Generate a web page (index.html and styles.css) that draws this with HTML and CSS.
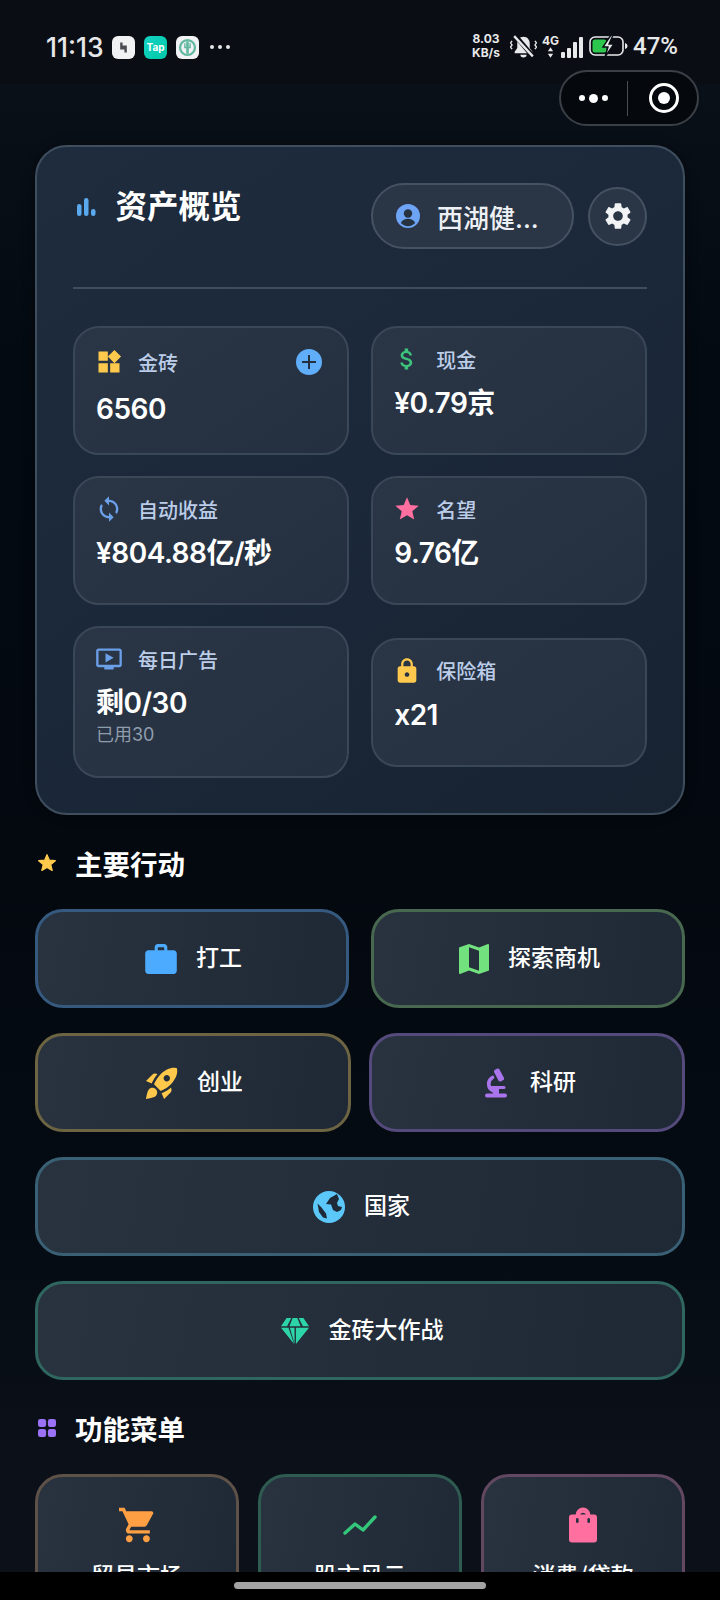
FILE: index.html
```html
<!DOCTYPE html>
<html lang="zh-CN">
<head>
    <meta charset="UTF-8">
    <meta name="viewport" content="width=device-width, initial-scale=1.0">
    <title>资产概览</title>
    <link rel="stylesheet" href="styles.css">
</head>
<body>
<div class="phone">

    <!-- Status bar -->
    <div class="status-bar">
        <div class="status-left">
            <span class="clock">11:13</span>
            <span class="app-icon app-white">
                <svg viewBox="0 0 24 24" width="17" height="17"><path d="M9 5v8h6M15 19v-8H9" fill="none" stroke="#4a4d52" stroke-width="3.4"/></svg>
            </span>
            <span class="app-icon app-tap">Tap</span>
            <span class="app-icon app-white">
                <svg viewBox="0 0 24 24" width="21" height="21"><circle cx="12" cy="12" r="8.5" fill="none" stroke="#62b8a0" stroke-width="2.6"/><path d="M12 5v14" stroke="#62b8a0" stroke-width="3"/><path d="M9 7v5h6V7" fill="none" stroke="#62b8a0" stroke-width="1.6"/></svg>
            </span>
            <span class="more-dots"><i></i><i></i><i></i></span>
        </div>
        <div class="status-right">
            <span class="net-speed">8.03<br>KB/s</span>
            <svg class="bell" viewBox="1 1 26 23" width="27" height="25">
                <path d="M14 3c-3.600 0-6 2.800-6 6.500v4.500L5.500 17.500v1.500h17v-1.500L20 14V9.500C20 5.800 17.600 3 14 3z" fill="#e8e9ea"/>
                <path d="M11 20.500h6a3 2.500 0 0 1-6 0z" fill="#e8e9ea"/>
                <path d="M6 2l17 20" stroke="#0a0e15" stroke-width="4.500"/>
                <path d="M5 2.500l18 19.500" stroke="#e8e9ea" stroke-width="2.200"/>
                <path d="M3 7L1.500 9 3 11l-1.500 2L3 15M25 7l1.500 2-1.500 2 1.500 2-1.500 2" fill="none" stroke="#e8e9ea" stroke-width="1.300"/>
            </svg>
            <span class="signal">
                <span class="net-type">4G
                    <svg viewBox="0 0 8 12" width="7" height="11"><path d="M4 0l3 4.500H1zM4 12L1 7.500h6z" fill="#e8e9ea"/></svg>
                </span>
                <span class="bars"><i class="bar1"></i><i class="bar2"></i><i class="bar3"></i><i class="bar4"></i></span>
            </span>
            <svg class="battery" viewBox="0 0 40 24" width="40" height="24">
                <rect x="1" y="3" width="33" height="18" rx="5" fill="none" stroke="#e8e9ea" stroke-width="1.600"/>
                <rect x="3.500" y="5.500" width="14" height="13" rx="2.500" fill="#2cc84d"/>
                <path d="M36 9v6c1.500-.5 2.500-1.500 2.500-3S37.500 9.500 36 9z" fill="#e8e9ea"/>
                <path d="M22 1l-8 12h5l-3 10 9-13h-5l4-9z" fill="#e8e9ea" stroke="#0a0e15" stroke-width="1.400"/>
            </svg>
            <span class="battery-pct">47%</span>
        </div>
    </div>

    <!-- Mini program capsule -->
    <div class="capsule">
        <span class="capsule-dots"><i></i><i class="big"></i><i></i></span>
        <span class="capsule-line"></span>
        <span class="capsule-target"><i></i></span>
    </div>

    <div class="content">

        <!-- Assets card -->
        <section class="asset-card">
            <div class="asset-head">
                <h1 class="asset-title">
                    <svg viewBox="0 0 20 20" width="20" height="20"><rect x="1" y="7" width="4.500" height="12" rx="2.200" fill="#5aa9ee"/><rect x="8" y="1" width="4.500" height="18" rx="2.200" fill="#5aa9ee"/><rect x="15" y="12" width="4.500" height="7" rx="2.200" fill="#5aa9ee"/></svg>
                    资产概览
                </h1>
                <div class="head-actions">
                    <div class="user-pill">
                        <svg viewBox="0 0 24 24" width="24" height="24"><circle cx="12" cy="12" r="12" fill="#6ea4f5"/><circle cx="12" cy="9.500" r="4.200" fill="#26323f"/><path d="M4.800 19c1.500-3 4-4.200 7.200-4.200s5.700 1.200 7.200 4.200c-1.800 2-4.400 3.200-7.200 3.200S6.600 21 4.800 19z" fill="#26323f"/></svg>
                        <span>西湖健...</span>
                    </div>
                    <div class="gear-btn">
                        <svg viewBox="0 0 24 24" width="32" height="32"><path fill="#f2f3f5" d="M19.140 12.940c.04-.3.06-.61.06-.94 0-.32-.02-.64-.07-.94l2.030-1.580c.18-.14.23-.41.12-.61l-1.920-3.320c-.12-.22-.37-.29-.59-.22l-2.390.96c-.5-.38-1.030-.7-1.620-.94l-.36-2.540c-.04-.24-.24-.41-.48-.41h-3.840c-.24 0-.43.17-.47.41l-.36 2.540c-.59.24-1.130.57-1.620.94l-2.390-.96c-.22-.08-.47 0-.59.22L2.740 8.870c-.12.21-.08.47.12.61l2.030 1.580c-.05.3-.09.63-.09.94s.02.64.07.94l-2.030 1.580c-.18.14-.23.41-.12.61l1.920 3.320c.12.22.37.29.59.22l2.390-.96c.5.38 1.030.7 1.620.94l.36 2.540c.05.24.24.41.48.41h3.840c.24 0 .44-.17.47-.41l.36-2.540c.59-.24 1.130-.56 1.620-.94l2.390.96c.22.08.47 0 .59-.22l1.920-3.320c.12-.22.07-.47-.12-.61l-2.010-1.580zM12 15.600c-1.980 0-3.600-1.620-3.600-3.600s1.620-3.600 3.600-3.600 3.600 1.620 3.600 3.600-1.620 3.600-3.600 3.600z"/></svg>
                    </div>
                </div>
            </div>

            <div class="tile-grid">
                <div class="tile">
                    <div class="tile-label tall">
                        <svg viewBox="0 0 24 24" width="28" height="28"><path fill="#ffc94d" d="M13 13v8h8v-8h-8zM3 21h8v-8H3v8zM3 3v8h8V3H3zm13.660-1.310L11 7.340 16.660 13l5.660-5.660-5.660-5.650z"/></svg>
                        <span>金砖</span>
                        <span class="plus-btn"></span>
                    </div>
                    <div class="tile-value">6560</div>
                </div>
                <div class="tile">
                    <div class="tile-label">
                        <svg viewBox="0 0 24 24" width="28" height="28"><path fill="#3cc47c" d="M11.800 10.900c-2.270-.59-3-1.200-3-2.150 0-1.090 1.010-1.850 2.700-1.850 1.780 0 2.440.85 2.500 2.100h2.210c-.07-1.720-1.120-3.300-3.210-3.810V3h-3v2.160c-1.940.42-3.500 1.680-3.500 3.610 0 2.310 1.910 3.460 4.700 4.130 2.500.6 3 1.480 3 2.410 0 .69-.49 1.790-2.700 1.790-2.060 0-2.870-.92-2.980-2.100h-2.200c.12 2.190 1.760 3.420 3.680 3.830V21h3v-2.150c1.950-.37 3.500-1.500 3.500-3.550 0-2.840-2.430-3.810-4.700-4.400z"/></svg>
                        <span>现金</span>
                    </div>
                    <div class="tile-value">¥0.79京</div>
                </div>
                <div class="tile">
                    <div class="tile-label">
                        <svg viewBox="0 0 24 24" width="28" height="28"><path fill="#6b9fe8" d="M12 4V1L8 5l4 4V6c3.310 0 6 2.690 6 6 0 1.010-.25 1.970-.7 2.800l1.460 1.460C19.540 15.030 20 13.570 20 12c0-4.420-3.580-8-8-8zm0 14c-3.310 0-6-2.690-6-6 0-1.010.25-1.970.7-2.800L5.240 7.740C4.460 8.970 4 10.430 4 12c0 4.420 3.580 8 8 8v3l4-4-4-4v3z"/></svg>
                        <span>自动收益</span>
                    </div>
                    <div class="tile-value">¥804.88亿/秒</div>
                </div>
                <div class="tile">
                    <div class="tile-label">
                        <svg viewBox="0 0 24 24" width="28" height="28"><path fill="#ff6f9f" d="M12 17.270L18.180 21l-1.640-7.030L22 9.240l-7.190-.61L12 2 9.190 8.630 2 9.240l5.460 4.730L5.820 21z"/></svg>
                        <span>名望</span>
                    </div>
                    <div class="tile-value">9.76亿</div>
                </div>
                <div class="tile">
                    <div class="tile-label">
                        <svg viewBox="0 0 24 24" width="28" height="28"><path fill="#6b9fe8" d="M21 3H3c-1.110 0-2 .89-2 2v12c0 1.100.89 2 2 2h5v2h8v-2h5c1.100 0 1.990-.9 1.990-2L23 5c0-1.110-.9-2-2-2zm0 14H3V5h18v12zm-5-6l-7 4V7z"/></svg>
                        <span>每日广告</span>
                    </div>
                    <div class="tile-value">剩0/30</div>
                    <div class="tile-sub">已用30</div>
                </div>
                <div class="tile">
                    <div class="tile-label">
                        <svg viewBox="0 0 24 24" width="28" height="28"><path fill="#ffc94d" d="M18 8h-1V6c0-2.760-2.240-5-5-5S7 3.240 7 6v2H6c-1.100 0-2 .9-2 2v10c0 1.100.9 2 2 2h12c1.100 0 2-.9 2-2V10c0-1.100-.9-2-2-2zm-6 9c-1.100 0-2-.9-2-2s.9-2 2-2 2 .9 2 2-.9 2-2 2zm3.100-9H8.900V6c0-1.710 1.390-3.100 3.100-3.100 1.710 0 3.100 1.390 3.100 3.100v2z"/></svg>
                        <span>保险箱</span>
                    </div>
                    <div class="tile-value">x21</div>
                </div>
            </div>
        </section>

        <!-- Main actions -->
        <h2 class="section-title">
            <svg class="star-icon" viewBox="0 0 24 24" width="20" height="20"><path fill="#ffc94d" stroke="#ffc94d" stroke-width="1.500" stroke-linejoin="round" d="M12 17.270L18.180 21l-1.640-7.030L22 9.240l-7.190-.61L12 2 9.190 8.630 2 9.240l5.460 4.730L5.820 21z"/></svg>
            主要行动
        </h2>
        <div class="actions">
            <div class="action-row">
                <button class="action-btn b-blue">
                    <svg viewBox="2 2 20 19" width="32" height="30"><path fill="#4dabff" d="M20 6h-4V4c0-1.110-.89-2-2-2h-4c-1.110 0-2 .89-2 2v2H4c-1.110 0-1.990.89-1.990 2L2 19c0 1.110.89 2 2 2h16c1.110 0 2-.89 2-2V8c0-1.110-.89-2-2-2zm-6 0h-4V4h4v2z"/></svg>
                    <span class="btn-text">打工</span>
                </button>
                <button class="action-btn b-green">
                    <svg viewBox="3 3 18 18" width="30" height="30"><path fill="#72e27e" d="M20.500 3l-.16.03L15 5.100 9 3 3.360 4.900c-.21.07-.36.25-.36.48V20.500c0 .28.22.5.5.5l.16-.03L9 18.900l6 2.100 5.640-1.900c.21-.07.36-.25.36-.48V3.500c0-.28-.22-.5-.5-.5zM15 19l-6-2.110V5l6 2.110V19z"/></svg>
                    <span class="btn-text">探索商机</span>
                </button>
            </div>
            <div class="action-row tight">
                <button class="action-btn b-gold">
                    <svg viewBox="2 2 20 20" width="32" height="32"><path fill="#ffc84a" d="M9.190 6.350c-2.040 2.290-3.440 5.580-3.570 5.890L2 10.690l4.050-4.050c.47-.47 1.150-.68 1.810-.55l1.330.26zM11.170 17s3.740-1.550 5.890-3.700c5.400-5.400 4.500-9.620 4.210-10.570-.95-.3-5.170-1.190-10.570 4.210C8.550 9.090 7 12.830 7 12.830L11.170 17zm6.480-2.190c-2.290 2.040-5.580 3.440-5.890 3.570L13.310 22l4.050-4.050c.47-.47.68-1.150.55-1.810l-.26-1.330zM9 18c0 .83-.34 1.580-.88 2.120C6.940 21.300 2 22 2 22s.7-4.940 1.880-6.120C4.420 15.340 5.170 15 6 15c1.660 0 3 1.340 3 3zm4-9c0-1.100.9-2 2-2s2 .9 2 2-.9 2-2 2-2-.9-2-2z"/></svg>
                    <span class="btn-text">创业</span>
                </button>
                <button class="action-btn b-purple">
                    <svg class="scope-icon" viewBox="0 0 24 30" width="24" height="30">
                        <rect x="12" y="0.500" width="6" height="13" rx="2" fill="#a974ec" transform="rotate(-28 15 7)"/>
                        <path d="M9.500 9.500a7.500 7.500 0 0 0 0 13" fill="none" stroke="#a974ec" stroke-width="3.600" stroke-linecap="round" transform="translate(-1 0)"/>
                        <path d="M6 19.500h14" stroke="#a974ec" stroke-width="3" stroke-linecap="round"/>
                        <rect x="9" y="20" width="6" height="6" fill="#a974ec"/>
                        <rect x="1" y="25.500" width="22" height="4" rx="2" fill="#a974ec"/>
                    </svg>
                    <span class="btn-text">科研</span>
                </button>
            </div>
            <button class="action-btn b-sky">
                <svg viewBox="0 0 32 32" width="32" height="32">
                    <circle cx="16" cy="16" r="16" fill="#5cc8fa"/>
                    <path d="M24 3l-7 4-4 6 5 .5 2 5.500 4 2 4-2 1-3-4-1-1-3 2-4z" fill="#1f2a38"/>
                    <path d="M4.500 12.500l4 4 4.500 6 1 5-4-1-4-5.500z" fill="#1f2a38"/>
                </svg>
                <span class="btn-text">国家</span>
            </button>
            <button class="action-btn b-teal">
                <svg viewBox="0 0 32 30" width="30" height="28">
                    <path d="M7 1h5l-4.500 9H1z M13.500 1h5l3.500 9H10z M20 1h5l6 9h-6.500z M1 11.500h8L15 29z M10.500 11.500h5V29z M17 11.500h5.500l.3 0L17 29z M22.500 11.500H31L17 29z" fill="#2dd4a8"/>
                </svg>
                <span class="btn-text">金砖大作战</span>
            </button>
        </div>

        <!-- Function menu -->
        <h2 class="section-title menu-title">
            <svg viewBox="0 0 20 20" width="18" height="18"><rect x="0" y="0" width="9" height="9" rx="2.500" fill="#9b72f5"/><rect x="11" y="0" width="9" height="9" rx="2.500" fill="#9b72f5"/><rect x="0" y="11" width="9" height="9" rx="2.500" fill="#9b72f5"/><rect x="11" y="11" width="9" height="9" rx="2.500" fill="#9b72f5"/></svg>
            功能菜单
        </h2>
        <div class="menu-grid">
            <div class="menu-card m-orange">
                <svg viewBox="1 2 21 20" width="36" height="36"><path fill="#ff9f43" d="M7 18c-1.100 0-1.990.9-1.990 2S5.900 22 7 22s2-.9 2-2-.9-2-2-2zM1 2v2h2l3.600 7.590-1.350 2.450c-.16.28-.25.61-.25.96 0 1.100.9 2 2 2h12v-2H7.420c-.14 0-.25-.11-.25-.25l.03-.12.9-1.630h7.450c.75 0 1.410-.41 1.750-1.030l3.580-6.490c.08-.14.12-.31.12-.48 0-.55-.45-1-1-1H5.210l-.94-2H1zm16 16c-1.100 0-1.990.9-1.990 2s.89 2 1.990 2 2-.9 2-2-.9-2-2-2z"/></svg>
                <span>贸易市场</span>
            </div>
            <div class="menu-card m-green">
                <svg viewBox="0 0 36 36" width="36" height="36"><path d="M3 26l10-9 8 6L33 10" fill="none" stroke="#34c77b" stroke-width="3.400" stroke-linecap="round" stroke-linejoin="round"/></svg>
                <span>股市风云</span>
            </div>
            <div class="menu-card m-pink">
                <svg viewBox="0 0 30 36" width="30" height="36">
                    <path d="M9 11V8a6 6 0 0 1 12 0v3" fill="none" stroke="#ff6f9f" stroke-width="2.800"/>
                    <rect x="1" y="7.500" width="28" height="28" rx="3" fill="#ff6f9f"/>
                    <path d="M10 5.800a6 6 0 0 1 10 0l1 4.700H9z" fill="#ff6f9f"/>
                    <path d="M12 7.500a3.500 3.500 0 0 1 6 0z" fill="#26323f"/>
                    <rect x="8" y="11" width="2.600" height="5" rx="1.300" fill="#26323f"/>
                    <rect x="19.400" y="11" width="2.600" height="5" rx="1.300" fill="#26323f"/>
                </svg>
                <span>消费/贷款</span>
            </div>
        </div>
    </div>

    <!-- Gesture bar -->
    <div class="gesture-bar"><span></span></div>
</div>
</body>
</html>
```

FILE: styles.css
```css
* {
    box-sizing: border-box;
}

body {
    margin: 0;
    background: #000;
    font-family: Inter, "Noto Sans CJK SC", sans-serif;
    color: #fff;
}

.phone {
    position: relative;
    width: 720px;
    height: 1600px;
    overflow: hidden;
    background: linear-gradient(180deg, #0c121b 0%, #040a11 22%, #03090f 55%, #050b12 75%, #0b1019 92%);
}

/* Status bar */
.status-bar {
    height: 84px;
    padding: 0 44px 0 46px;
    display: flex;
    justify-content: space-between;
    align-items: flex-start;
    background: #0a0d14;
}

.status-left {
    display: flex;
    align-items: center;
    height: 94px;
}

.clock {
    font-size: 26.5px;
    font-weight: 500;
    color: #e6e7e9;
    width: 66px;
}

.app-icon {
    width: 23px;
    height: 23px;
    border-radius: 6px;
    margin-right: 9px;
    display: flex;
    align-items: center;
    justify-content: center;
}

.app-white {
    background: #f1f2f3;
}

.app-tap {
    background: linear-gradient(135deg, #14d2c3, #00c8a8);
    font-size: 10px;
    font-weight: 700;
    color: #fff;
}

.more-dots {
    display: flex;
    gap: 4px;
    margin-left: 2px;
}

.more-dots i {
    width: 4px;
    height: 4px;
    border-radius: 50%;
    background: #e6e7e9;
}

.status-right {
    display: flex;
    align-items: center;
    height: 92px;
    color: #e8e9ea;
}

.net-speed {
    font-size: 12px;
    line-height: 14px;
    font-weight: 700;
    width: 30px;
    margin-right: 9px;
    text-align: center;
    white-space: nowrap;
}

.bell {
    margin-right: 5px;
}

.signal {
    display: flex;
    align-items: flex-end;
    width: 37px;
    height: 24px;
    margin-right: 10px;
}

.net-type {
    font-size: 12px;
    line-height: 12px;
    font-weight: 700;
    width: 17px;
    flex: none;
    display: flex;
    flex-direction: column;
    align-items: center;
}

.bars {
    display: flex;
    align-items: flex-end;
    gap: 2.5px;
    margin-left: 2px;
}

.bars i {
    width: 3.5px;
    background: #e8e9ea;
    border-radius: 1px;
}

.bar1 { height: 6px; }
.bar2 { height: 10px; }
.bar3 { height: 16px; }
.bar4 { height: 21px; }

.battery {
    margin-right: 4px;
}

.battery-pct {
    font-family: Roboto, sans-serif;
    font-size: 24px;
    font-weight: 500;
    width: 43px;
    white-space: nowrap;
}

/* Capsule */
.capsule {
    position: absolute;
    left: 559px;
    top: 70px;
    width: 140px;
    height: 56px;
    border: 2px solid #3b4047;
    border-radius: 28px;
    background: #05080d;
    display: flex;
    align-items: center;
}

.capsule-dots {
    width: 64px;
    margin-right: 2px;
    display: flex;
    justify-content: center;
    align-items: center;
    gap: 4px;
}

.capsule-dots i {
    width: 6px;
    height: 6px;
    border-radius: 50%;
    background: #fff;
}

.capsule-dots i.big {
    width: 9px;
    height: 9px;
}

.capsule-line {
    width: 1px;
    height: 35px;
    background: #4a4e54;
}

.capsule-target {
    width: 30px;
    height: 30px;
    border: 3px solid #fff;
    border-radius: 50%;
    margin-left: 21px;
    display: flex;
    align-items: center;
    justify-content: center;
}

.capsule-target i {
    width: 12px;
    height: 12px;
    border-radius: 50%;
    background: #fff;
}

/* Page content */
.content {
    padding: 61px 35px 0;
}

.asset-card {
    height: 670px;
    padding: 36px 36px 0 35.5px;
    border: 2px solid #3f4e5f;
    border-radius: 32px;
    background: linear-gradient(145deg, #1f2c3d 0%, #1b2839 50%, #172331 100%);
    box-shadow: 0 0 12px rgba(0, 0, 0, 0.4);
}

.asset-head {
    display: flex;
    justify-content: space-between;
    align-items: flex-start;
    height: 106px;
    border-bottom: 2px solid #3f4d5e;
}

.asset-title {
    margin: 0;
    display: flex;
    align-items: center;
    gap: 20px;
    padding-left: 3px;
    font-size: 31.5px;
    line-height: 48px;
    font-weight: 700;
}

.head-actions {
    display: flex;
    align-items: center;
    gap: 14px;
}

.user-pill {
    width: 203px;
    height: 66px;
    border: 2px solid #445262;
    border-radius: 33px;
    background: #2a3645;
    padding-left: 23px;
    display: flex;
    align-items: center;
    gap: 17px;
    font-size: 26px;
    font-weight: 500;
    color: #edf0f4;
    white-space: nowrap;
}

.gear-btn {
    width: 59px;
    height: 59px;
    border: 2px solid #445262;
    border-radius: 50%;
    background: #2a3645;
    display: flex;
    align-items: center;
    justify-content: center;
}

.tile-grid {
    margin-top: 37px;
    display: grid;
    grid-template-columns: 1fr 1fr;
    column-gap: 22px;
    row-gap: 21px;
    align-items: center;
}

.tile {
    min-height: 129px;
    padding: 20px 21.5px;
    border: 2px solid #3a4757;
    border-radius: 26px;
    background: linear-gradient(145deg, #2a3645, #243040);
}

.tile-label {
    display: flex;
    align-items: center;
    gap: 15px;
    height: 22px;
    font-size: 20px;
    font-weight: 500;
    color: #bccde9;
}

.tile-label.tall {
    height: 28px;
}

.tile-label svg {
    flex: none;
    margin-left: -1px;
}

.plus-btn {
    position: relative;
    width: 26px;
    height: 26px;
    margin-left: auto;
    margin-right: 3px;
    border-radius: 50%;
    background: #60adfa;
}

.plus-btn::before,
.plus-btn::after {
    content: "";
    position: absolute;
    background: #22303f;
    left: 6px;
    top: 12px;
    width: 14px;
    height: 2px;
}

.plus-btn::after {
    left: 12px;
    top: 6px;
    width: 2px;
    height: 14px;
}

.tile-value {
    margin-top: 13px;
    font-size: 28px;
    line-height: 40px;
    font-weight: 600;
    letter-spacing: -0.5px;
}

.tile-sub {
    margin-top: -1px;
    margin-bottom: 8px;
    font-size: 18px;
    line-height: 26px;
    color: #8f9cac;
}

.section-title {
    margin: 28px 0 26px;
    display: flex;
    align-items: center;
    gap: 18px;
    height: 40px;
    font-size: 27.5px;
    font-weight: 600;
}

.section-title svg {
    flex: none;
    margin-left: 3px;
}

.section-title .star-icon {
    margin-left: 2px;
}

.menu-title {
    margin: 28px 0 26px;
    gap: 19px;
}

.actions {
    display: flex;
    flex-direction: column;
    gap: 25px;
}

.action-row {
    display: grid;
    grid-template-columns: 1fr 1fr;
    gap: 22px;
}

.action-row.tight {
    gap: 18px;
}

.action-btn {
    height: 99px;
    padding: 0 0 0 3px;
    display: flex;
    align-items: center;
    justify-content: center;
    gap: 19px;
    border: 3px solid #3f5166;
    border-radius: 28px;
    background: linear-gradient(100deg, #28333f, #1f2936);
    font-family: "Noto Sans CJK SC", sans-serif;
    font-size: 23px;
    font-weight: 500;
    color: #fff;
}

.btn-text {
    padding-bottom: 6px;
}

.scope-icon {
    margin: 0 3px;
}

.b-blue { border-color: #35597f; }
.b-green { border-color: #48694f; }
.b-gold { border-color: #6c6442; }
.b-purple { border-color: #554a7c; }
.b-sky { border-color: #3a6075; }
.b-teal { border-color: #2f6660; }

.menu-grid {
    display: grid;
    grid-template-columns: repeat(3, 1fr);
    gap: 19px;
}

.menu-card {
    height: 170px;
    padding-top: 30px;
    display: flex;
    flex-direction: column;
    align-items: center;
    gap: 14px;
    border: 3px solid #5e5148;
    border-radius: 28px;
    background: linear-gradient(100deg, #28333f, #1f2936);
    font-family: "Noto Sans CJK SC", sans-serif;
    font-size: 23px;
    font-weight: 500;
}

.m-orange { border-color: #5e5148; }
.m-green { border-color: #2f5c50; }
.m-pink { border-color: #634861; }

/* Gesture bar lies over the menu */
.gesture-bar {
    position: absolute;
    left: 0;
    right: 0;
    bottom: 0;
    height: 28px;
    background: #000;
}

.gesture-bar span {
    position: absolute;
    left: 234px;
    top: 10px;
    width: 252px;
    height: 7px;
    border-radius: 4px;
    background: #a3a3a3;
}
```
